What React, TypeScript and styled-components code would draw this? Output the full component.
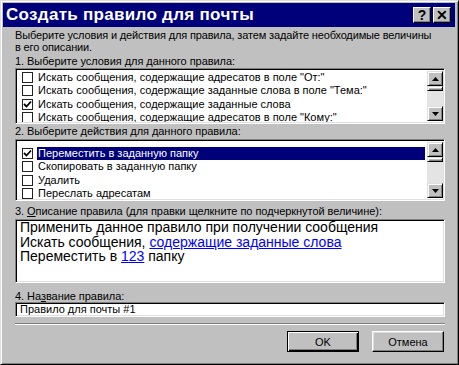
import React from "react";
import styled, { createGlobalStyle } from "styled-components";

const Global = createGlobalStyle`
  html, body { margin: 0; padding: 0; background: #c0c0c0; }
  body { font-family: "Liberation Sans", Arial, sans-serif; }
  * { box-sizing: border-box; }
`;

const Window = styled.div`
  width: 459px;
  height: 365px;
  background: #c0c0c0;
  border: 1px solid;
  border-color: #dfdfdf #000 #000 #dfdfdf;
  box-shadow: inset 1px 1px #fff, inset -1px -1px #808080;
  padding: 2px 3px 0 2px;
  display: flex;
  flex-direction: column;
  overflow: hidden;
`;

const TitleBar = styled.div`
  height: 24px;
  flex: none;
  background: #00007b;
  display: flex;
  align-items: center;
  justify-content: space-between;
  padding: 0 4px 0 3px;
`;

const Title = styled.div`
  color: #fff;
  font-weight: bold;
  font-size: 17px;
  letter-spacing: 0.3px;
`;

const TitleButtons = styled.div`
  display: flex;
  gap: 2px;
`;

const TitleButton = styled.div`
  width: 18px;
  height: 16px;
  background: #c0c0c0;
  border: 1px solid;
  border-color: #fff #000 #000 #fff;
  box-shadow: inset -1px -1px #808080;
  display: flex;
  align-items: center;
  justify-content: center;
  color: #000;
  font-weight: bold;
  font-size: 14px;
  line-height: 1;
`;

const Body = styled.div`
  flex: 1;
  display: flex;
  flex-direction: column;
  padding: 1px 10px 0 12px;
  font-size: 11px;
  color: #000;
`;

const Intro = styled.div`
  line-height: 12px;
  margin-top: 1px;
  letter-spacing: -0.15px;
`;

const Label = styled.div<{ $top: number; $bottom: number }>`
  line-height: 12px;
  margin-top: ${(p) => p.$top}px;
  margin-bottom: ${(p) => p.$bottom}px;
  letter-spacing: -0.05px;
  u { text-decoration: underline; }
`;

const Sunken = styled.div`
  background: #fff;
  border: 1px solid;
  border-color: #808080 #fff #fff #808080;
  box-shadow: inset 1px 1px #000, inset -1px -1px #dfdfdf;
  flex: none;
`;

const ListBox = styled(Sunken)<{ $h: number }>`
  height: ${(p) => p.$h}px;
  padding: 1px;
  display: grid;
  grid-template-columns: 1fr 16px;
  overflow: hidden;
`;

const Rows = styled.div<{ $offset: number }>`
  display: flex;
  flex-direction: column;
  padding-top: ${(p) => p.$offset}px;
  overflow: hidden;
  padding-left: 5px;
`;

const Row = styled.div<{ $selected?: boolean }>`
  height: 13.33px;
  flex: none;
  display: flex;
  align-items: center;
  gap: 4px;
  white-space: nowrap;
  span {
    background: ${(p) => (p.$selected ? "#00007b" : "transparent")};
    color: ${(p) => (p.$selected ? "#fff" : "#000")};
    flex: 1;
    line-height: 13px;
    padding-left: 1px;
    margin-right: 2px;
  }
`;

const Check = styled.div`
  width: 11px;
  height: 11px;
  flex: none;
  background: #fff;
  border: 1px solid #222;
  display: flex;
  align-items: center;
  justify-content: center;
`;

const ScrollBar = styled.div`
  display: flex;
  flex-direction: column;
  background: #e4e4e4;
  margin: 1px 0;
`;

const ScrollBtn = styled.div`
  height: 15px;
  background: #c0c0c0;
  border: 1px solid;
  border-color: #dfdfdf #000 #000 #dfdfdf;
  box-shadow: inset 1px 1px #fff, inset -1px -1px #808080;
  display: flex;
  align-items: center;
  justify-content: center;
  flex: none;
`;

const Thumb = styled(ScrollBtn)`
  height: 5px;
`;

const Spacer = styled.div`
  flex: 1;
`;

const Desc = styled(Sunken)`
  height: 64px;
  padding: 0 4px;
  font-size: 14px;
  line-height: 14.5px;
  a {
    color: #0000ff;
    text-decoration: underline;
  }
`;

const Input = styled(Sunken)`
  height: 15px;
  padding: 0 4px;
  line-height: 13px;
`;

const Separator = styled.div`
  height: 2px;
  flex: none;
  margin-top: 6px;
  border-top: 1px solid #808080;
  border-bottom: 1px solid #fff;
`;

const Buttons = styled.div`
  display: flex;
  justify-content: flex-end;
  gap: 13px;
  margin-top: 6px;
  padding-right: 1px;
`;

const Button = styled.div<{ $default?: boolean }>`
  width: 72px;
  height: 21px;
  background: #c0c0c0;
  display: flex;
  align-items: center;
  justify-content: center;
  font-size: 11px;
  border: 1px solid;
  border-color: ${(p) => (p.$default ? "#000" : "#fff #000 #000 #fff")};
  box-shadow: ${(p) =>
    p.$default
      ? "inset 1px 1px #fff, inset -1px -1px #000, inset -2px -2px #808080"
      : "inset -1px -1px #808080, inset 1px 1px #dfdfdf"};
`;

const Arrow = ({ up }: { up?: boolean }) => (
  <svg width="7" height="4" viewBox="0 0 7 4">
    <path d={up ? "M3.5 0 L7 4 L0 4 Z" : "M0 0 L7 0 L3.5 4 Z"} fill="#000" />
  </svg>
);

const Tick = () => (
  <svg width="9" height="9" viewBox="0 0 9 9">
    <path d="M1 4 L3.5 6.5 L8 1.5" stroke="#000" strokeWidth="1.8" fill="none" />
  </svg>
);

type Item = { text: string; checked?: boolean; selected?: boolean };

const conditions: Item[] = [
  { text: "Искать сообщения, содержащие адресатов в поле \"От:\"" },
  { text: "Искать сообщения, содержащие заданные слова в поле \"Тема:\"" },
  { text: "Искать сообщения, содержащие заданные слова", checked: true },
  { text: "Искать сообщения, содержащие адресатов в поле \"Кому:\"" },
];

const actions: Item[] = [
  { text: "Переместить в заданную папку", checked: true, selected: true },
  { text: "Скопировать в заданную папку" },
  { text: "Удалить" },
  { text: "Переслать адресатам" },
];

const List = ({ items, h, offset }: { items: Item[]; h: number; offset: number }) => (
  <ListBox $h={h}>
    <Rows $offset={offset}>
      {items.map((it) => (
        <Row key={it.text} $selected={it.selected}>
          <Check>{it.checked && <Tick />}</Check>
          <span>{it.text}</span>
        </Row>
      ))}
    </Rows>
    <ScrollBar>
      <ScrollBtn>
        <Arrow up />
      </ScrollBtn>
      <Thumb />
      <Spacer />
      <ScrollBtn>
        <Arrow />
      </ScrollBtn>
    </ScrollBar>
  </ListBox>
);

export default function App() {
  return (
    <>
      <Global />
      <Window>
        <TitleBar>
          <Title>Создать правило для почты</Title>
          <TitleButtons>
            <TitleButton>?</TitleButton>
            <TitleButton>✕</TitleButton>
          </TitleButtons>
        </TitleBar>
        <Body>
          <Intro>
            Выберите условия и действия для правила, затем задайте необходимые величины
            <br />в его описании.
          </Intro>
          <Label $top={2} $bottom={1}>1. Выберите условия для данного правила:</Label>
          <List items={conditions} h={56} offset={1} />
          <Label $top={1} $bottom={2}>2. Выберите действия для данного правила:</Label>
          <List items={actions} h={62} offset={6} />
          <Label $top={4} $bottom={2}>
            3. <u>О</u>писание правила (для правки щелкните по подчеркнутой величине):
          </Label>
          <Desc>
            Применить данное правило при получении сообщения
            <br />
            Искать сообщения, <a>содержащие заданные слова</a>
            <br />
            Переместить в <a>123</a> папку
          </Desc>
          <Label $top={7} $bottom={0}>
            4. На<u>з</u>вание правила:
          </Label>
          <Input>Правило для почты #1</Input>
          <Separator />
          <Buttons>
            <Button $default>OK</Button>
            <Button>Отмена</Button>
          </Buttons>
        </Body>
      </Window>
    </>
  );
}
